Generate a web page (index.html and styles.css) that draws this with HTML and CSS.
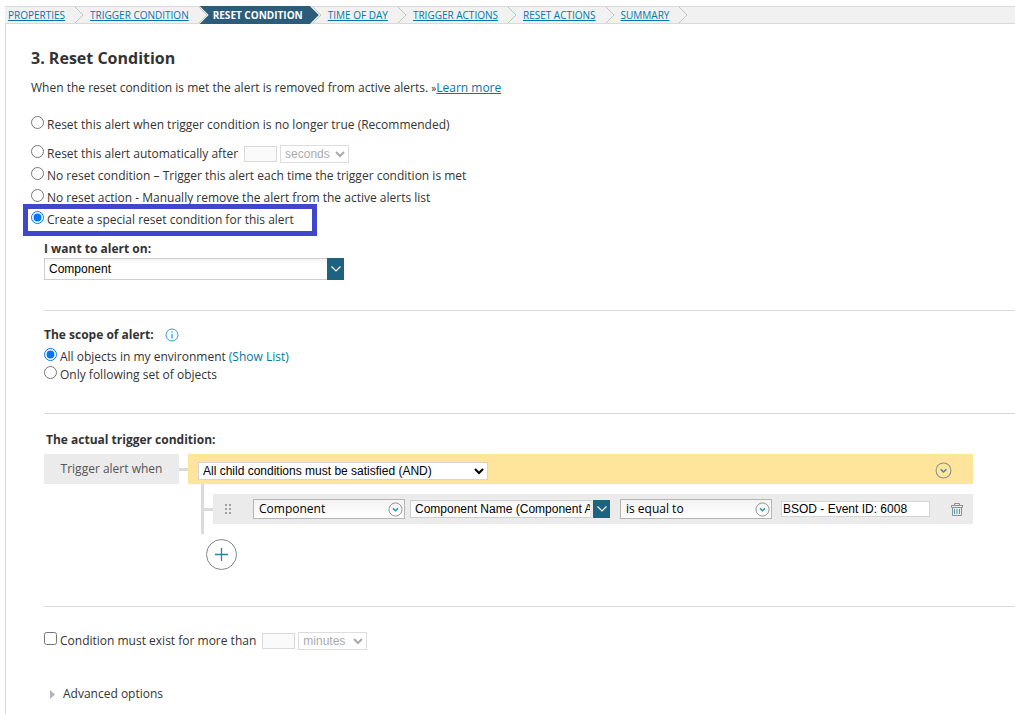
FILE: index.html
```html
<!DOCTYPE html>
<html lang="en">
  <head>
    <meta charset="UTF-8" />
    <meta name="viewport" content="width=device-width, initial-scale=1.0" />
    <title>Reset Condition</title>
    <link rel="stylesheet" href="styles.css">
  </head>
  <body>
    <!-- shared icons -->
    <svg class="sprite" aria-hidden="true">
      <symbol id="step" viewBox="0 0 10 16">
        <path d="M1 0L9 8L1 16" fill="none" stroke="#c4c4c4" />
      </symbol>
      <symbol id="circle-down" viewBox="0 0 16 16">
        <circle cx="8" cy="8" r="7" fill="none" stroke="#8f8f8f" />
        <path d="M5.3 6.8L8 9.4L10.7 6.8" fill="none" stroke="#2a93b5" stroke-width="1.5" />
      </symbol>
      <symbol id="chevron" viewBox="0 0 10 6">
        <path d="M0.5 0.5L5 5L9.5 0.5" fill="none" stroke="#fff" stroke-width="1.2" />
      </symbol>
    </svg>

    <nav class="wizard">
      <a href="#">PROPERTIES</a>
      <svg class="step"><use href="#step" /></svg>
      <a href="#">TRIGGER CONDITION</a>
      <svg class="step last"><use href="#step" /></svg>
      <span class="current">RESET CONDITION</span>
      <svg class="step first"><use href="#step" /></svg>
      <a href="#">TIME OF DAY</a>
      <svg class="step"><use href="#step" /></svg>
      <a href="#">TRIGGER ACTIONS</a>
      <svg class="step"><use href="#step" /></svg>
      <a href="#">RESET ACTIONS</a>
      <svg class="step"><use href="#step" /></svg>
      <a href="#">SUMMARY</a>
      <svg class="step"><use href="#step" /></svg>
    </nav>

    <main class="panel">
      <h1>3. Reset Condition</h1>
      <p class="intro">When the reset condition is met the alert is removed from active alerts. <span class="raquo">»</span><a href="#">Learn more</a></p>

      <div class="options">
        <div class="option spaced">
          <input type="radio" name="reset" id="r1" />
          <label for="r1">Reset this alert when trigger condition is no longer true (Recommended)</label>
        </div>
        <div class="option">
          <input type="radio" name="reset" id="r2" />
          <label for="r2">Reset this alert automatically after</label>
          <input type="text" class="amount" aria-label="Reset after" disabled />
          <select class="unit" aria-label="Reset unit" disabled><option>seconds</option></select>
        </div>
        <div class="option">
          <input type="radio" name="reset" id="r3" />
          <label for="r3">No reset condition – Trigger this alert each time the trigger condition is met</label>
        </div>
        <div class="option">
          <input type="radio" name="reset" id="r4" />
          <label for="r4">No reset action - Manually remove the alert from the active alerts list</label>
        </div>
        <div class="option highlight">
          <input type="radio" name="reset" id="r5" checked />
          <label for="r5">Create a special reset condition for this alert</label>
        </div>
      </div>

      <section class="alert-on">
        <label class="title" for="alertOn">I want to alert on:</label>
        <div class="combo">
          <input type="text" id="alertOn" value="Component" />
          <button type="button" aria-label="Open list"><svg><use href="#chevron" /></svg></button>
        </div>
      </section>

      <section class="scope">
        <h2 class="title">The scope of alert:
          <svg class="info" viewBox="0 0 14 14">
            <circle cx="7" cy="7" r="6" fill="none" stroke="#2a9fd0" />
            <path d="M7 3.2V4.6M7 6V10.5" stroke="#2a9fd0" stroke-width="1.3" />
          </svg>
        </h2>
        <div class="option">
          <input type="radio" name="scope" id="s1" checked />
          <label for="s1">All objects in my environment</label>
          <a class="show-list" href="#">(Show List)</a>
        </div>
        <div class="option">
          <input type="radio" name="scope" id="s2" />
          <label for="s2">Only following set of objects</label>
        </div>
      </section>

      <section class="trigger">
        <h2 class="title">The actual trigger condition:</h2>
        <div class="builder">
          <div class="when">Trigger alert when</div>
          <div class="line"></div>
          <div class="group">
            <div class="group-head">
              <select aria-label="Condition group"><option>All child conditions must be satisfied (AND)</option></select>
              <button type="button" class="icon-btn" aria-label="Group menu"><svg><use href="#circle-down" /></svg></button>
            </div>
            <div class="children">
              <div class="line"></div>
              <div class="rule">
                <svg class="grip" viewBox="0 0 6 10">
                  <path d="M0 0h2v2h-2zM4 0h2v2h-2zM0 4h2v2h-2zM4 4h2v2h-2zM0 8h2v2h-2zM4 8h2v2h-2z" fill="#a0a0a0" />
                </svg>
                <button type="button" class="picker">Component <svg><use href="#circle-down" /></svg></button>
                <div class="combo small">
                  <input type="text" aria-label="Field" value="Component Name (Component A" />
                  <button type="button" aria-label="Open list"><svg><use href="#chevron" /></svg></button>
                </div>
                <button type="button" class="picker operator">is equal to <svg><use href="#circle-down" /></svg></button>
                <input type="text" class="value" aria-label="Value" value="BSOD - Event ID: 6008" />
                <button type="button" class="trash" aria-label="Delete">
                  <svg viewBox="0 0 12 13">
                    <path d="M0 2.5H12M3.5 2.5V.5H8.5V2.5M0.5 2V4.5H11.5V2M1.5 4.5V12.5H10.5V4.5" fill="none" stroke="#909090" />
                    <path d="M3.5 6V11M6 6V11M8.5 6V11" stroke="#4a9db8" />
                  </svg>
                </button>
              </div>
            </div>
            <button type="button" class="add" aria-label="Add condition">
              <svg viewBox="0 0 31 31">
                <circle cx="15.5" cy="15.5" r="15" fill="#fff" stroke="#858585" />
                <path d="M15.5 9V22M9 15.5H22" stroke="#1b86aa" stroke-width="1.3" />
              </svg>
            </button>
          </div>
        </div>
      </section>

      <section class="more">
        <div class="option">
          <input type="checkbox" id="exist" />
          <label for="exist">Condition must exist for more than</label>
          <input type="text" class="amount" aria-label="Duration" disabled />
          <select class="unit" aria-label="Duration unit" disabled><option>minutes</option></select>
        </div>
        <button type="button" class="advanced">
          <svg viewBox="0 0 5 9"><path d="M0 0L5 4.5L0 9z" fill="#b5b5b5" /></svg>
          Advanced options
        </button>
      </section>
    </main>
  </body>
</html>
```
FILE: styles.css
```css
* {
  box-sizing: border-box;
  margin: 0;
  padding: 0;
}
body {
  padding: 6px 0 0 5px;
  font-family: "Open Sans", sans-serif;
  font-size: 12px;
  line-height: 20px;
  color: #333;
  background: #fff;
}
a {
  color: #0079aa;
}
button {
  font: inherit;
  color: inherit;
  background: none;
  border: 0;
}
svg {
  display: block;
  flex: none;
}
.sprite {
  display: none;
}

/* wizard steps */
.wizard {
  display: flex;
  height: 18px;
  padding-left: 3px;
  font-size: 10px;
  line-height: 16px;
  white-space: nowrap;
  background: #f1f1f1;
  border-top: 1px solid #d9d9d9;
  border-bottom: 1px solid #d9d9d9;
}
.wizard a {
  text-underline-offset: 1px;
}
.step {
  width: 10px;
  height: 16px;
  margin: 0 6px 0 9px;
}
.step.last {
  margin-right: -8px;
}
.step.first {
  margin-left: -7px;
}
.current {
  height: 18px;
  margin-top: -1px;
  padding: 0 16px 0 13px;
  line-height: 18px;
  font-weight: 700;
  color: #fff;
  background: #2b5d7b;
  clip-path: polygon(0 0, calc(100% - 9px) 0, 100% 50%, calc(100% - 9px) 100%, 0 100%, 9px 50%);
}

.panel {
  padding: 24px 0 0 25px;
  border-left: 1px solid #d9d9d9;
}
h1 {
  font-size: 16px;
  font-weight: 700;
  line-height: 20px;
}
.intro {
  margin-top: 10px;
}
.raquo {
  font-size: 10px;
}

/* radio and checkbox rows */
.option {
  position: relative;
  display: flex;
  align-items: center;
  height: 22px;
}
.option input[type="radio"],
.option input[type="checkbox"] {
  width: 13px;
  height: 13px;
  margin: 0 3px 6px 0;
}
.options {
  margin-top: 16px;
}
.spaced {
  margin-bottom: 7px;
}
.highlight::before {
  content: "";
  position: absolute;
  top: -5px;
  left: -8px;
  width: 284px;
  height: 22px;
  border: 5px solid #3f48cc;
  pointer-events: none;
}
.amount {
  width: 33px;
  height: 16px;
  margin: 0 3px 0 6px;
  background: #fafafa;
  border: 1px solid #d9d9d9;
}
.unit {
  width: 69px;
  height: 18px;
  font: 12px "Liberation Sans", Arial, sans-serif;
  color: #888;
  background: #fff;
  border: 1px solid #d0d0d0;
}

section {
  margin-left: 13px;
  border-bottom: 1px solid #d9d9d9;
}
.title {
  display: flex;
  align-items: center;
  font-size: 12px;
  font-weight: 700;
  line-height: 18px;
}
.combo {
  display: flex;
  width: 300px;
  height: 22px;
}
.combo input {
  flex: 1;
  min-width: 0;
  padding: 0 4px;
  font: 12px "Liberation Sans", Arial, sans-serif;
  color: #000;
  background: linear-gradient(#f3f3f3, #fff 5px);
  border: 1px solid #cfcfcf;
  border-right: 0;
}
.combo button {
  display: grid;
  place-items: center;
  width: 17px;
  background: #1d637f;
}
.combo svg {
  width: 10px;
  height: 6px;
}
.alert-on {
  margin-top: 9px;
  padding-bottom: 30px;
}
.scope {
  padding: 15px 0 29px;
}
.scope .option {
  height: 18px;
}
.scope .title {
  margin-bottom: 4px;
}
.info {
  width: 14px;
  height: 14px;
  margin-left: 11px;
}
.show-list {
  margin-left: 3px;
  text-decoration: none;
}

/* condition builder */
.trigger {
  padding: 17px 42px 36px 0;
}
.trigger .title {
  padding-left: 2px;
}
.builder {
  display: flex;
  margin-top: 5px;
}
.when {
  width: 135px;
  height: 30px;
  line-height: 30px;
  text-align: center;
  color: #555;
  background: #ebebeb;
}
.line {
  width: 9px;
  height: 3px;
  margin-top: 14px;
  background: #dadada;
}
.group {
  flex: 1;
}
.group-head {
  display: flex;
  align-items: center;
  justify-content: space-between;
  height: 30px;
  padding: 3px 21px 0 10px;
  background: #ffe59c;
}
.group-head select {
  width: 290px;
  height: 18px;
  font: 12px "Liberation Sans", Arial, sans-serif;
  color: #000;
  background: #fff;
  border: 1px solid #d5d5d5;
}
.group-head svg {
  width: 17px;
  height: 17px;
}
.children {
  display: flex;
  margin-left: 13px;
  padding: 10px 0;
  border-left: 3px solid #dadada;
}
.rule {
  display: flex;
  flex: 1;
  align-items: center;
  height: 30px;
  padding: 0 10px 0 12px;
  background: #ebebeb;
}
.grip {
  width: 6px;
  height: 10px;
  margin-right: 22px;
}
.picker {
  display: flex;
  align-items: center;
  justify-content: space-between;
  width: 152px;
  height: 20px;
  padding: 0 1px 0 5px;
  color: #000;
  background: linear-gradient(#f3f3f3, #fff);
  border: 1px solid #b5b5b5;
}
.picker svg {
  width: 15px;
  height: 15px;
}
.combo.small {
  width: 200px;
  height: 18px;
  margin: 0 10px 0 5px;
}
.small input {
  padding-right: 0;
  border-right: 3px solid #ebebeb;
}
.value {
  width: 149px;
  height: 16px;
  margin-left: 9px;
  padding: 0 1px;
  font: 12px "Liberation Sans", Arial, sans-serif;
  color: #000;
  background: #fff;
  border: 1px solid #d5d5d5;
}
.trash {
  margin-left: auto;
}
.trash svg {
  width: 12px;
  height: 13px;
}
.add {
  display: block;
  margin: 5px 0 0 18px;
}
.add svg {
  width: 31px;
  height: 31px;
}

.more {
  padding: 23px 0 10px;
  border-bottom: 0;
}
.advanced {
  display: flex;
  align-items: center;
  margin: 32px 0 0 6px;
}
.advanced svg {
  width: 5px;
  height: 9px;
  margin-right: 8px;
}
```
